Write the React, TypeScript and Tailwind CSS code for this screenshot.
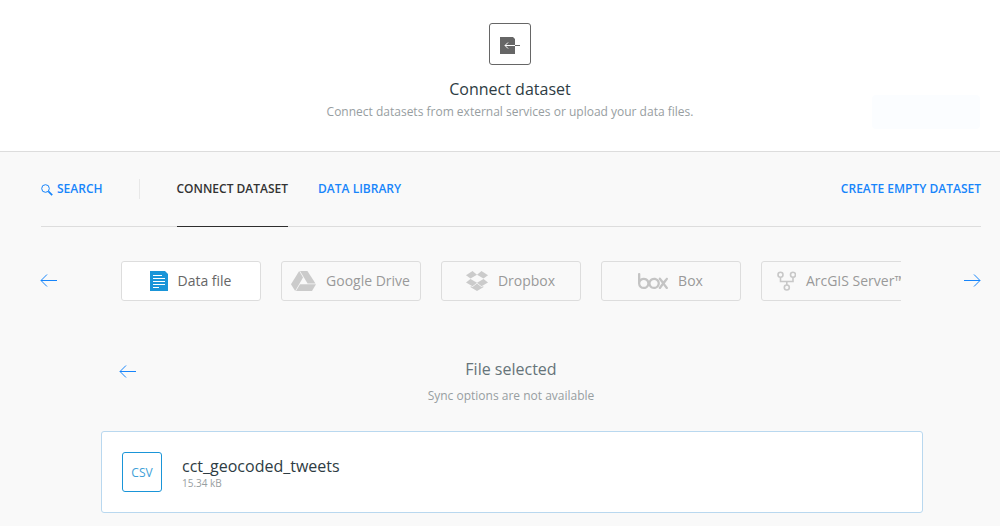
import type { ReactNode } from "react";
import { SiBox } from "react-icons/si";

function Arrow({ flip = false }: { flip?: boolean }) {
  return (
    <svg
      width="18"
      height="14"
      viewBox="0 0 18 14"
      fill="none"
      stroke="currentColor"
      strokeWidth="1"
      className={flip ? "-scale-x-100" : ""}
      aria-hidden="true"
    >
      <path d="M1 6.5H17M7 0.5L1 6.5L7 12.5" />
    </svg>
  );
}

function FileIcon() {
  return (
    <svg width="18" height="20" viewBox="0 0 18 20" aria-hidden="true">
      <path d="M0 0H15L18 3V20H0Z" fill="#1a95d8" />
      <path d="M3 4.5H12M3 7.5H15M3 10.5H15M3 13.5H15M3 16.5H9" stroke="#fff" />
    </svg>
  );
}

function DriveIcon() {
  return (
    <svg width="25" height="20" viewBox="0 0 25 20" fill="#cbcbcb" aria-hidden="true">
      <path d="M8.2 0L12 6.6L4.2 20L0 13.3Z" />
      <path d="M9 0H16.4L24.5 12.4H16.6Z" />
      <path d="M9 13.2H25L21 20H5Z" />
    </svg>
  );
}

function DropboxIcon() {
  return (
    <svg width="22" height="20" viewBox="0 0 22 20" fill="#cbcbcb" aria-hidden="true">
      <path d="M6.5 0L11 3.8L4.5 7.6L0 4.2Z" />
      <path d="M15.5 0L22 4.2L17.5 7.6L11 3.8Z" />
      <path d="M4.5 7.9L11 11.7L6.5 15.2L0 11.4Z" />
      <path d="M17.5 7.9L22 11.4L15.5 15.2L11 11.7Z" />
      <path d="M11 12.6L15.4 16L17.3 15V16.3L11 20L4.7 16.3V15L6.6 16Z" />
    </svg>
  );
}

function BoxIcon() {
  return (
    <span className="flex h-5 w-[30px] items-center justify-center overflow-hidden text-[#c4c4c4]">
      <SiBox size={30} className="shrink-0" aria-hidden="true" />
    </span>
  );
}

function ForkIcon() {
  return (
    <svg
      width="20"
      height="20"
      viewBox="0 0 20 20"
      fill="none"
      stroke="#c8c8c8"
      strokeWidth="1.6"
      aria-hidden="true"
    >
      <circle cx="4.5" cy="3.8" r="2.5" />
      <circle cx="17" cy="3.8" r="2.5" />
      <circle cx="10.8" cy="16.5" r="2.5" />
      <path d="M4.5 6.5V10.5H17V6.5M10.8 10.5V14" />
    </svg>
  );
}

const providers: { name: string; icon: ReactNode; style: string }[] = [
  {
    name: "Data file",
    icon: <FileIcon />,
    style: "w-[140px] bg-white text-[#666666]",
  },
  { name: "Google Drive", icon: <DriveIcon />, style: "w-[140px] text-[#999999]" },
  { name: "Dropbox", icon: <DropboxIcon />, style: "w-[140px] text-[#999999]" },
  { name: "Box", icon: <BoxIcon />, style: "w-[140px] text-[#999999]" },
  { name: "ArcGIS Server™", icon: <ForkIcon />, style: "w-40 text-[#999999]" },
];

export default function App() {
  return (
    <div className="min-h-screen bg-[#f9f9f9] font-['Open_Sans',sans-serif] text-[#2e3c43]">
      <header className="relative border-b border-[#dddddd] bg-white pt-[23px] pb-7 pl-5">
        <div
          className="absolute top-[95px] right-5 h-[34px] w-[108px] rounded bg-[#fbfdff]"
          aria-hidden="true"
        />
        <div className="relative flex flex-col items-center">
          <div className="flex size-[42px] items-center justify-center rounded-[3px] border border-[#666666] text-[#666666]">
            <svg width="22" height="20" viewBox="0 0 22 20" aria-hidden="true">
              <path d="M1 3H14L16 5V20H1Z" fill="currentColor" />
              <path d="M6 11.5H16M9 8.5L6 11.5L9 14.5" fill="none" stroke="#fff" />
              <path d="M16 11.5H21" stroke="currentColor" />
            </svg>
          </div>
          <h1 className="mt-3 text-base leading-6">Connect dataset</h1>
          <p className="text-xs leading-[22px] text-[#979ea1]">
            Connect datasets from external services or upload your data files.
          </p>
        </div>
      </header>

      <main className="pr-[19px] pb-3 pl-[41px]">
        <nav className="flex h-[75px] items-stretch border-b border-[#dddddd] text-xs font-semibold text-[#1785fb]">
          <button type="button" className="flex items-center gap-1">
            <svg
              width="12"
              height="12"
              viewBox="0 0 12 12"
              fill="none"
              stroke="currentColor"
              className="mt-0.5"
              aria-hidden="true"
            >
              <circle cx="4.5" cy="4.5" r="3.8" strokeWidth="1" />
              <path d="M7.4 7.4L11.2 11.2" strokeWidth="1.7" />
            </svg>
            SEARCH
          </button>
          <span className="ml-9 h-5 w-px self-center bg-[#e8e8e8]" />
          <a
            href="#connect"
            aria-current="page"
            className="-mb-px ml-[37px] flex items-center border-b border-[#2e2e2e] text-[#333333]"
          >
            CONNECT DATASET
          </a>
          <a href="#library" className="ml-[30px] flex items-center">
            DATA LIBRARY
          </a>
          <button type="button" className="ml-auto">
            CREATE EMPTY DATASET
          </button>
        </nav>

        <section className="mt-[34px] flex items-center text-[#1785fb]">
          <button type="button" aria-label="Previous services" className="-ml-px">
            <Arrow />
          </button>
          <div className="mr-[62px] ml-[63px] flex min-w-0 flex-1 gap-5 overflow-hidden">
            {providers.map((provider) => (
              <button
                key={provider.name}
                type="button"
                className={`flex h-10 shrink-0 items-center justify-center gap-2.5 rounded-[3px] border border-[#dddddd] pr-px text-sm whitespace-nowrap ${provider.style}`}
              >
                {provider.icon}
                {provider.name}
              </button>
            ))}
          </div>
          <button type="button" aria-label="Next services">
            <Arrow flip />
          </button>
        </section>

        <section className="mr-[58px] ml-[60px]">
          <div className="mt-14 grid grid-cols-[1fr_auto_1fr] items-start pr-5 pl-[18px]">
            <button
              type="button"
              aria-label="Back"
              className="mt-2 justify-self-start text-[#1785fb]"
            >
              <Arrow />
            </button>
            <div className="text-center">
              <h2 className="text-base leading-6 text-[#66747a]">File selected</h2>
              <p className="mt-1 text-xs leading-[22px] text-[#979ea1]">
                Sync options are not available
              </p>
            </div>
          </div>
          <div className="mt-6 flex h-[82px] items-center rounded-[3px] border border-[#b9d8ef] bg-white px-5">
            <div className="flex size-10 items-center justify-center rounded-[3px] border border-[#1a95d8] pt-0.5 text-xs text-[#409fd8]">
              CSV
            </div>
            <div className="ml-5 pt-0.5">
              <h3 className="text-base leading-5">cct_geocoded_tweets</h3>
              <p className="text-[10px] leading-3.5 text-[#979ea1]">15.34 kB</p>
            </div>
          </div>
        </section>
      </main>
    </div>
  );
}
